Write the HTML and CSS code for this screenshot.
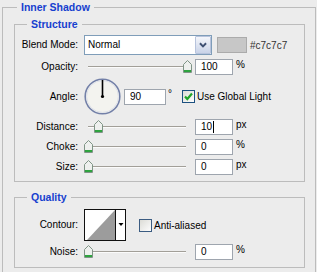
FILE: index.html
```html
<!DOCTYPE html>
<html lang="en">
<head>
<meta charset="utf-8">
<title>Inner Shadow</title>
<link rel="stylesheet" href="styles.css">
</head>
<body>
<fieldset class="panel">
  <legend class="panel-title">Inner Shadow</legend>

  <fieldset class="group group-structure">
    <legend class="group-title">Structure</legend>

    <div class="row row-blend">
      <span class="label">Blend Mode:</span>
      <div class="controls">
        <div class="select">
          <span class="select-value">Normal</span>
          <span class="select-btn">
            <svg width="16" height="18" viewBox="0 0 16 18"><path d="M4.5 7 L8 10.5 L11.5 7" fill="none" stroke="#3d4f72" stroke-width="2.2"/></svg>
          </span>
        </div>
        <span class="swatch"></span>
        <span class="hex">#c7c7c7</span>
      </div>
    </div>

    <div class="row row-opacity">
      <span class="label">Opacity:</span>
      <div class="controls">
        <div class="slider">
          <span class="track"></span>
          <span class="thumb" style="left:99px"><svg width="9" height="13" viewBox="0 0 9 13"><path d="M0.5 4.5 L4.5 0.5 L8.5 4.5 V12.5 H0.5 Z" fill="#eef0ee" stroke="#7f9486"/><rect x="1" y="10" width="7" height="2" fill="#2ea33f"/></svg></span>
        </div>
        <span class="field">100</span>
        <span class="unit">%</span>
      </div>
    </div>

    <div class="row row-angle">
      <span class="label">Angle:</span>
      <div class="controls">
        <svg class="dial" width="37" height="37" viewBox="0 0 37 37">
          <circle cx="18.5" cy="18.5" r="17.3" fill="#f3f3ef" stroke="#7380a8" stroke-width="1.6"/>
          <circle cx="18.5" cy="18.5" r="15.9" fill="none" stroke="#dfe2ea" stroke-width="1"/>
          <line x1="18.5" y1="18.5" x2="18.5" y2="2" stroke="#000" stroke-width="1.6"/>
          <circle cx="18.5" cy="18.5" r="1.6" fill="#000"/>
        </svg>
        <span class="field field-angle">90</span>
        <span class="deg">°</span>
        <span class="check check-on">
          <svg width="11" height="11" viewBox="0 0 11 11"><path d="M2 5.5 L4.3 8 L9 2.5" fill="none" stroke="#22a52a" stroke-width="2.2"/></svg>
        </span>
        <span class="check-label">Use Global Light</span>
      </div>
    </div>

    <div class="row row-distance">
      <span class="label">Distance:</span>
      <div class="controls">
        <div class="slider">
          <span class="track"></span>
          <span class="thumb" style="left:10px"><svg width="9" height="13" viewBox="0 0 9 13"><path d="M0.5 4.5 L4.5 0.5 L8.5 4.5 V12.5 H0.5 Z" fill="#eef0ee" stroke="#7f9486"/><rect x="1" y="10" width="7" height="2" fill="#2ea33f"/></svg></span>
        </div>
        <span class="field">10<span class="caret"></span></span>
        <span class="unit">px</span>
      </div>
    </div>

    <div class="row row-next">
      <span class="label">Choke:</span>
      <div class="controls">
        <div class="slider">
          <span class="track"></span>
          <span class="thumb" style="left:0px"><svg width="9" height="13" viewBox="0 0 9 13"><path d="M0.5 4.5 L4.5 0.5 L8.5 4.5 V12.5 H0.5 Z" fill="#eef0ee" stroke="#7f9486"/><rect x="1" y="10" width="7" height="2" fill="#2ea33f"/></svg></span>
        </div>
        <span class="field">0</span>
        <span class="unit">%</span>
      </div>
    </div>

    <div class="row row-next">
      <span class="label">Size:</span>
      <div class="controls">
        <div class="slider">
          <span class="track"></span>
          <span class="thumb" style="left:0px"><svg width="9" height="13" viewBox="0 0 9 13"><path d="M0.5 4.5 L4.5 0.5 L8.5 4.5 V12.5 H0.5 Z" fill="#eef0ee" stroke="#7f9486"/><rect x="1" y="10" width="7" height="2" fill="#2ea33f"/></svg></span>
        </div>
        <span class="field">0</span>
        <span class="unit">px</span>
      </div>
    </div>
  </fieldset>

  <fieldset class="group group-quality">
    <legend class="group-title">Quality</legend>

    <div class="row row-contour">
      <span class="label">Contour:</span>
      <div class="controls">
        <svg class="contour" width="42" height="32" viewBox="0 0 42 32">
          <rect x="0.5" y="0.5" width="41" height="31" fill="#fff" stroke="#111"/>
          <polygon points="3,31 31,1 31,31" fill="#9c9c9c"/>
          <line x1="31.5" y1="0.5" x2="31.5" y2="31.5" stroke="#111"/>
          <polygon points="34.5,14 39.5,14 37,17" fill="#000"/>
        </svg>
        <span class="check check-off"></span>
        <span class="check-label">Anti-aliased</span>
      </div>
    </div>

    <div class="row row-noise">
      <span class="label">Noise:</span>
      <div class="controls">
        <div class="slider">
          <span class="track"></span>
          <span class="thumb" style="left:0px"><svg width="9" height="13" viewBox="0 0 9 13"><path d="M0.5 4.5 L4.5 0.5 L8.5 4.5 V12.5 H0.5 Z" fill="#eef0ee" stroke="#7f9486"/><rect x="1" y="10" width="7" height="2" fill="#2ea33f"/></svg></span>
        </div>
        <span class="field">0</span>
        <span class="unit">%</span>
      </div>
    </div>
  </fieldset>
</fieldset>
</body>
</html>
```

FILE: styles.css
```css
html, body {
  margin: 0;
  padding: 0;
  overflow: hidden;
}

body {
  width: 317px;
  height: 272px;
  background: #ececec;
  font-family: "Liberation Sans", Arial, sans-serif;
  font-size: 10px;
  color: #000;
}

.panel {
  margin: 0 1px 0 2px;
  padding: 0 0 4px;
  border: 1px solid #bcbcbc;
  border-bottom: none;
  min-width: 0;
}

.panel-title,
.group-title {
  padding: 0 4px;
  font-family: "Liberation Sans", Arial, sans-serif;
  font-size: 10.5px;
  font-weight: bold;
  line-height: 15px;
  color: #1640cf;
}

.panel-title {
  margin-left: 14px;
}

.group-title {
  margin-left: 12px;
}

.group {
  margin: 2px 10px 0 11px;
  padding: 3px 0 6px;
  border: 1px solid #bcbcbc;
  min-width: 0;
}

.group-quality {
  margin-top: 8px;
  padding: 4px 0 7px;
}

.row {
  display: grid;
  grid-template-columns: 63px auto;
  column-gap: 6px;
  align-items: center;
  height: 16px;
}

.row-blend { height: 20px; }
.row-opacity { margin-top: 4px; }
.row-angle { margin-top: 3px; height: 37px; }
.row-distance { margin-top: 4px; }
.row-next { margin-top: 4px; }
.row-contour { height: 32px; }
.row-noise { margin-top: 3px; }

.label {
  text-align: right;
  white-space: nowrap;
  line-height: 12px;
}

.controls {
  display: flex;
  align-items: center;
  height: 100%;
}

/* select */
.select {
  display: flex;
  align-items: stretch;
  box-sizing: border-box;
  width: 128px;
  height: 20px;
  border: 1px solid #7f9db9;
  background: #fff;
}

.select-value {
  flex: 1;
  padding-left: 3px;
  line-height: 18px;
}

.select-btn {
  display: flex;
  align-items: center;
  justify-content: center;
  box-sizing: border-box;
  width: 16px;
  border: 1px solid #b7c3dc;
  border-radius: 1px;
  background: linear-gradient(#f4f6fb, #c9d3e8);
}

.select-btn svg {
  display: block;
}

.swatch {
  box-sizing: border-box;
  width: 30px;
  height: 16px;
  margin-left: 5px;
  border: 1px solid #ababab;
  background: #c7c7c7;
}

.hex {
  margin-left: 3px;
  color: #333;
}

/* slider */
.slider {
  position: relative;
  width: 111px;
  height: 16px;
  flex: none;
}

.track {
  position: absolute;
  left: 4px;
  top: 7px;
  width: 98px;
  height: 1px;
  background: #a29f98;
  border-bottom: 1px solid #fbfbfb;
}

.thumb {
  position: absolute;
  top: 1px;
  width: 9px;
  height: 13px;
}

.thumb svg {
  display: block;
}

/* fields */
.field {
  display: flex;
  align-items: center;
  box-sizing: border-box;
  width: 38px;
  height: 16px;
  padding-left: 5px;
  border: 1px solid #9ea5ae;
  background: #fff;
  line-height: 12px;
  flex: none;
}

.field-angle {
  width: 42px;
  margin-left: 3px;
}

.caret {
  display: inline-block;
  width: 1px;
  height: 12px;
  margin-left: 1px;
  background: #000;
}

.unit {
  align-self: flex-start;
  margin-left: 3px;
  line-height: 11px;
}

.deg {
  align-self: flex-start;
  margin-top: 10px;
  margin-left: 2px;
  line-height: 11px;
}

.dial {
  display: block;
  flex: none;
}

/* checkboxes */
.check {
  display: flex;
  align-items: center;
  justify-content: center;
  box-sizing: border-box;
  width: 13px;
  height: 13px;
  border: 1px solid #1c5180;
  background: linear-gradient(135deg, #dcdcd6, #fdfdfd);
  flex: none;
}

.check-on {
  margin-left: 10px;
}

.check-off {
  margin-left: 13px;
  border-color: #3b5c82;
}

.check-label {
  margin-left: 2px;
  white-space: nowrap;
}

.contour {
  display: block;
  flex: none;
}
```
